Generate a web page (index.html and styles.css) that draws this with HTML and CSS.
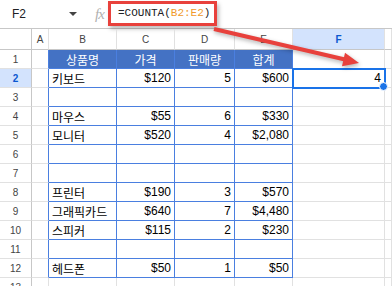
FILE: index.html
```html
<!DOCTYPE html>
<html lang="ko">
<head>
    <meta charset="UTF-8">
    <title>COUNTA</title>
    <link rel="stylesheet" href="styles.css">
</head>
<body>
    <div class="sheet">
        <div class="formula-bar">
            <div class="name-box">F2</div>
            <span class="caret"></span>
            <span class="fx">fx</span>
            <div class="formula">=COUNTA(<span class="ref">B2:E2</span>)</div>
        </div>

        <div class="grid">
            <div class="hd corner"></div>
            <div class="hd">A</div>
            <div class="hd">B</div>
            <div class="hd">C</div>
            <div class="hd">D</div>
            <div class="hd">E</div>
            <div class="hd active">F</div>
            <div class="hd"></div>

            <div class="rn">1</div>
            <div class="c ta"></div>
            <div class="c t th">상품명</div>
            <div class="c t th">가격</div>
            <div class="c t th">판매량</div>
            <div class="c t th">합계</div>
            <div class="c"></div>
            <div class="c"></div>

            <div class="rn active">2</div>
            <div class="c ta"></div>
            <div class="c t">키보드</div>
            <div class="c t num">$120</div>
            <div class="c t num">5</div>
            <div class="c t num">$600</div>
            <div class="c num sel">4</div>
            <div class="c"></div>

            <div class="rn">3</div>
            <div class="c ta"></div>
            <div class="c t"></div>
            <div class="c t"></div>
            <div class="c t"></div>
            <div class="c t"></div>
            <div class="c"></div>
            <div class="c"></div>

            <div class="rn">4</div>
            <div class="c ta"></div>
            <div class="c t">마우스</div>
            <div class="c t num">$55</div>
            <div class="c t num">6</div>
            <div class="c t num">$330</div>
            <div class="c"></div>
            <div class="c"></div>

            <div class="rn">5</div>
            <div class="c ta"></div>
            <div class="c t">모니터</div>
            <div class="c t num">$520</div>
            <div class="c t num">4</div>
            <div class="c t num">$2,080</div>
            <div class="c"></div>
            <div class="c"></div>

            <div class="rn">6</div>
            <div class="c ta"></div>
            <div class="c t"></div>
            <div class="c t"></div>
            <div class="c t"></div>
            <div class="c t"></div>
            <div class="c"></div>
            <div class="c"></div>

            <div class="rn">7</div>
            <div class="c ta"></div>
            <div class="c t"></div>
            <div class="c t"></div>
            <div class="c t"></div>
            <div class="c t"></div>
            <div class="c"></div>
            <div class="c"></div>

            <div class="rn">8</div>
            <div class="c ta"></div>
            <div class="c t">프린터</div>
            <div class="c t num">$190</div>
            <div class="c t num">3</div>
            <div class="c t num">$570</div>
            <div class="c"></div>
            <div class="c"></div>

            <div class="rn">9</div>
            <div class="c ta"></div>
            <div class="c t">그래픽카드</div>
            <div class="c t num">$640</div>
            <div class="c t num">7</div>
            <div class="c t num">$4,480</div>
            <div class="c"></div>
            <div class="c"></div>

            <div class="rn">10</div>
            <div class="c ta"></div>
            <div class="c t">스피커</div>
            <div class="c t num">$115</div>
            <div class="c t num">2</div>
            <div class="c t num">$230</div>
            <div class="c"></div>
            <div class="c"></div>

            <div class="rn">11</div>
            <div class="c ta"></div>
            <div class="c t"></div>
            <div class="c t"></div>
            <div class="c t"></div>
            <div class="c t"></div>
            <div class="c"></div>
            <div class="c"></div>

            <div class="rn">12</div>
            <div class="c ta"></div>
            <div class="c t">헤드폰</div>
            <div class="c t num">$50</div>
            <div class="c t num">1</div>
            <div class="c t num">$50</div>
            <div class="c"></div>
            <div class="c"></div>

            <div class="rn">13</div>
            <div class="c"></div>
            <div class="c"></div>
            <div class="c"></div>
            <div class="c"></div>
            <div class="c"></div>
            <div class="c"></div>
            <div class="c"></div>
        </div>

        <!-- callout arrow from formula to result -->
        <svg class="callout" width="392" height="286" viewBox="0 0 392 286">
            <line x1="214" y1="29" x2="345" y2="59.5" stroke="#e8413c" stroke-width="4"/>
            <polygon points="359,63 345,52.7 342,66.3" fill="#e8413c"/>
        </svg>
    </div>
</body>
</html>
```

FILE: styles.css
```css
* {
    margin: 0;
    padding: 0;
    box-sizing: border-box;
}

body {
    font-family: 'Liberation Sans', Arial, 'Noto Sans CJK KR', sans-serif;
    color: #000;
    background: #fff;
}

.sheet {
    position: relative;
    width: 392px;
    height: 286px;
    overflow: hidden;
}

/* formula bar */
.formula-bar {
    height: 29px;
    display: flex;
    align-items: center;
    border-bottom: 1px solid #c7c7c7;
}

.name-box {
    width: 69px;
    padding-left: 12px;
    font-size: 12px;
    color: #202124;
}

.caret {
    width: 0;
    height: 0;
    border-top: 4px solid #444;
    border-left: 4px solid transparent;
    border-right: 4px solid transparent;
    margin-right: 18px;
}

.fx {
    font-family: 'Liberation Serif', serif;
    font-style: italic;
    font-size: 15px;
    color: #b0b0b0;
    width: 13px;
    letter-spacing: -1px;
}

.formula {
    height: 25px;
    margin-top: -2px;
    padding: 0 4px 0 7px;
    display: flex;
    align-items: center;
    border: 3px solid #e8413c;
    font-family: 'Liberation Mono', monospace;
    font-size: 11px;
    color: #202124;
    box-shadow: 2px 3px 4px rgba(0, 0, 0, 0.25);
}

.ref {
    color: #f09a2a;
}

/* grid */
.grid {
    display: grid;
    grid-template-columns: 32px 17px 68px 58px 60px 58px 92px 1fr;
    grid-template-rows: 21px;
    grid-auto-rows: 19px;
}

.hd,
.rn,
.c {
    border-right: 1px solid #e1e1e1;
    border-bottom: 1px solid #e1e1e1;
    display: flex;
    align-items: center;
    white-space: nowrap;
    overflow: visible;
}

.hd {
    justify-content: center;
    font-size: 10px;
    color: #444;
    border-bottom-color: #c7c7c7;
}

.rn {
    justify-content: center;
    font-size: 10px;
    color: #444;
    border-right-color: #c7c7c7;
}

.hd.corner {
    border-right-color: #c7c7c7;
}

.hd.active,
.rn.active {
    background: #d3e3fd;
    color: #0b57d0;
    font-weight: bold;
}

.c {
    padding: 0 3px;
    font-size: 12px;
}

.num {
    justify-content: flex-end;
}

/* data table B1:E12 */
.t {
    border-right-color: #4a7fe0;
    border-bottom-color: #4a7fe0;
}

.ta {
    border-right-color: #4a7fe0;
}

.th {
    background: #4472c4;
    color: #fff;
    justify-content: center;
}

/* selected cell */
.sel {
    position: relative;
    outline: 2px solid #1a73e8;
    outline-offset: -1px;
}

.sel::after {
    content: "";
    position: absolute;
    right: -4px;
    bottom: -4px;
    width: 7px;
    height: 7px;
    border-radius: 50%;
    background: #1a73e8;
    border: 1px solid #fff;
}

.callout {
    position: absolute;
    top: 0;
    left: 0;
    pointer-events: none;
    filter: drop-shadow(1px 2px 2px rgba(0, 0, 0, 0.3));
}
```
